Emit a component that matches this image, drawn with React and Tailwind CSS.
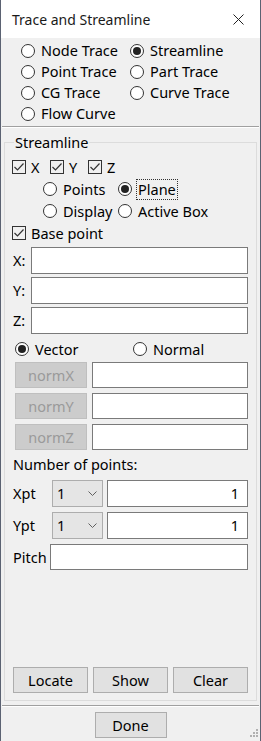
import React from 'react';

function Radio({ label, checked, focus, className = '' }) {
  return (
    <div className={`flex items-center gap-[6px] ${className}`}>
      <span className="w-[14px] h-[14px] shrink-0 rounded-full border border-[#333] bg-white flex items-center justify-center">
        {checked && <span className="w-[8px] h-[8px] rounded-full bg-[#222]" />}
      </span>
      <span className={focus ? 'outline outline-1 outline-dotted outline-[#333] px-[1px] -ml-[1px]' : ''}>{label}</span>
    </div>
  );
}

function Check({ label, className = '' }) {
  return (
    <div className={`flex items-center gap-[5px] ${className}`}>
      <span className="w-[14px] h-[14px] shrink-0 border border-[#333] flex items-center justify-center">
        <svg width="12" height="12" viewBox="0 0 12 12">
          <path d="M1.5 6 L4.5 9 L10.5 2.5" fill="none" stroke="#333" strokeWidth="1.2" />
        </svg>
      </span>
      <span>{label}</span>
    </div>
  );
}

function Field({ className = '', value }) {
  return (
    <div className={`bg-white border border-[#7a7a7a] flex items-center justify-end pr-[8px] ${className}`}>
      {value}
    </div>
  );
}

function Btn({ children, disabled, className = '' }) {
  return (
    <div
      className={`flex items-center justify-center border ${
        disabled ? 'bg-[#cccccc] border-[#bfbfbf] text-[#9a9a9a]' : 'bg-[#e1e1e1] border-[#adadad] text-black'
      } ${className}`}
    >
      {children}
    </div>
  );
}

function Combo() {
  return (
    <div className="w-[51px] h-[27px] shrink-0 bg-[#e5e5e5] border border-[#adadad] flex items-center justify-between pl-[4px] pr-[5px]">
      <span>1</span>
      <svg width="9" height="5" viewBox="0 0 9 5">
        <path d="M0.5 0.5 L4.5 4.5 L8.5 0.5" fill="none" stroke="#606060" strokeWidth="1" />
      </svg>
    </div>
  );
}

function Separator() {
  return (
    <div className="mx-px">
      <div className="h-px bg-[#a0a0a0]" />
      <div className="h-px bg-white" />
    </div>
  );
}

export default function App() {
  return (
    <div className="w-[261px] h-[741px] flex flex-col bg-[#f0f0f0] border-x border-[#5b6272] font-['Noto_Sans',sans-serif] text-[14.5px] leading-[19px] text-black">
      <div className="h-[38px] shrink-0 bg-white flex items-center justify-between pl-[11px] pr-[16px]">
        <span className="text-[14px] text-[#1a1a1a]">Trace and Streamline</span>
        <svg width="11" height="11" viewBox="0 0 11 11">
          <path d="M0.5 0.5 L10.5 10.5 M10.5 0.5 L0.5 10.5" stroke="#222" strokeWidth="1" />
        </svg>
      </div>

      <div className="pt-[2px] pl-[20px] grid grid-cols-[109px_1fr]">
        <Radio className="h-[21px]" label="Node Trace" />
        <Radio className="h-[21px]" label="Streamline" checked />
        <Radio className="h-[21px]" label="Point Trace" />
        <Radio className="h-[21px]" label="Part Trace" />
        <Radio className="h-[21px]" label="CG Trace" />
        <Radio className="h-[21px]" label="Curve Trace" />
        <Radio className="h-[21px]" label="Flow Curve" />
      </div>

      <div className="mt-[2px]">
        <Separator />
      </div>

      <div className="mx-[3px] mt-[14px] flex-1 border border-[#dcdcdc] flex flex-col pl-[7px] pr-[8px] pb-[7px]">
        <span className="-mt-[10px] ml-[2px] self-start bg-[#f0f0f0] px-px">Streamline</span>

        <div className="mt-[4px] h-[22px] flex items-center">
          <Check className="w-[38px]" label="X" />
          <Check className="w-[38px]" label="Y" />
          <Check label="Z" />
        </div>
        <div className="pl-[31px] grid grid-cols-[75px_1fr]">
          <Radio className="h-[22px]" label="Points" />
          <Radio className="h-[22px]" label="Plane" checked focus />
          <Radio className="h-[22px]" label="Display" />
          <Radio className="h-[22px]" label="Active Box" />
        </div>
        <Check className="h-[22px]" label="Base point" />

        <div className="mt-[3px] flex flex-col gap-[3px]">
          {['X:', 'Y:', 'Z:'].map((l) => (
            <div key={l} className="flex items-center">
              <span className="w-[19px] pl-px">{l}</span>
              <Field className="flex-1 h-[27px]" />
            </div>
          ))}
        </div>

        <div className="mt-[4px] h-[22px] pl-[3px] grid grid-cols-[118px_1fr]">
          <Radio label="Vector" checked />
          <Radio label="Normal" />
        </div>

        <div className="mt-[2px] flex flex-col gap-[5px]">
          {['normX', 'normY', 'normZ'].map((l) => (
            <div key={l} className="flex items-center gap-[5px] pl-[3px]">
              <Btn disabled className="w-[72px] h-[26px]">{l}</Btn>
              <Field className="flex-1 h-[26px]" />
            </div>
          ))}
        </div>

        <div className="mt-[4px] h-[20px] pl-px flex items-center">Number of points:</div>

        <div className="mt-[6px] flex flex-col gap-[5px]">
          {['Xpt', 'Ypt'].map((l) => (
            <div key={l} className="flex items-center">
              <span className="w-[40px] pl-px">{l}</span>
              <Combo />
              <Field className="ml-[4px] flex-1 h-[27px]" value="1" />
            </div>
          ))}
          <div className="flex items-center">
            <span className="w-[38px] pl-px">Pitch</span>
            <Field className="flex-1 h-[26px]" />
          </div>
        </div>

        <div className="flex-1" />

        <div className="ml-px grid grid-cols-3 gap-[5px]">
          <Btn className="h-[26px]">Locate</Btn>
          <Btn className="h-[26px]">Show</Btn>
          <Btn className="h-[26px]">Clear</Btn>
        </div>
      </div>

      <div className="mt-[4px]">
        <Separator />
      </div>

      <div className="relative mt-[5px] pb-[3px] flex justify-center">
        <Btn className="w-[72px] h-[26px]">Done</Btn>
        <svg className="absolute right-[2px] bottom-[2px]" width="10" height="10" viewBox="0 0 10 10">
          <g fill="#b0b0b0">
            <rect x="8" y="0" width="2" height="2" />
            <rect x="5" y="3" width="2" height="2" />
            <rect x="8" y="3" width="2" height="2" />
            <rect x="2" y="6" width="2" height="2" />
            <rect x="5" y="6" width="2" height="2" />
            <rect x="8" y="6" width="2" height="2" />
          </g>
        </svg>
      </div>
    </div>
  );
}
